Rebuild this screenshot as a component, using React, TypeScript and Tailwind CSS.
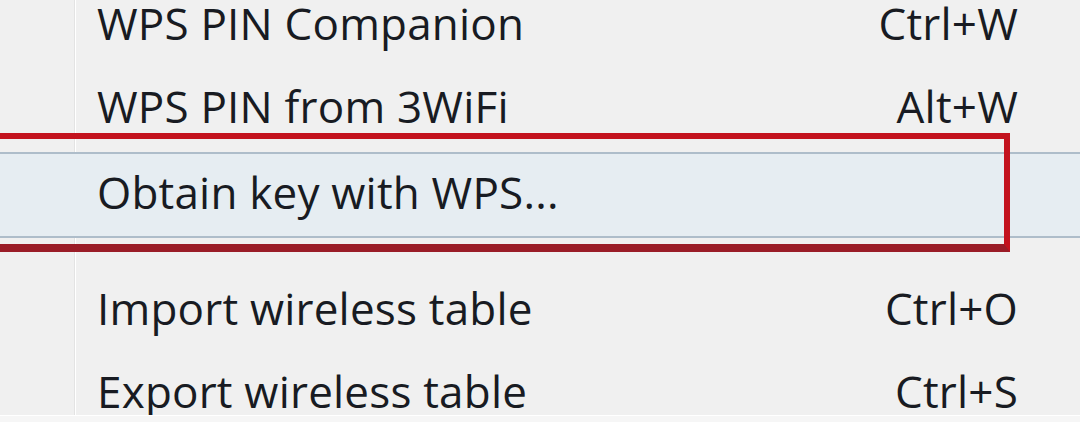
import React from "react";

const font = { fontFamily: '"Open Sans", "Noto Sans", "Liberation Sans", sans-serif' };

function Row({
  label,
  shortcut,
  className,
}: {
  label: string;
  shortcut?: string;
  className: string;
}) {
  return (
    <div className={`flex justify-between pl-[97px] pr-[62px] shrink-0 ${className}`}>
      <span>{label}</span>
      {shortcut ? <span>{shortcut}</span> : null}
    </div>
  );
}

export default function App() {
  return (
    <div
      className="relative w-[1080px] h-[422px] overflow-hidden bg-[#f0f0f0] text-[44px] leading-[40px] font-medium text-[#181b22] tracking-[0.2px]"
      style={font}
    >
      {/* gutter separator */}
      <div className="absolute left-[74px] top-0 bottom-0 w-[2px] bg-[#e3e3e3] border-r border-white" />
      <div className="relative flex flex-col">
        <Row label="WPS PIN Companion" shortcut="Ctrl+W" className="h-[63px] items-start pt-[3px]" />
        <Row label="WPS PIN from 3WiFi" shortcut="Alt+W" className="h-[89px] items-start pt-[23px]" />
        <div className="h-[86px] shrink-0 flex items-start pt-[18px] pl-[97px] pr-[62px] border-y-2 border-[#aebdca] bg-[#e6edf2]">
          <span>Obtain key with WPS...</span>
        </div>
        <div className="h-[27px] shrink-0" />
        <Row label="Import wireless table" shortcut="Ctrl+O" className="h-[83px] items-start pt-[23px]" />
        <Row label="Export wireless table" shortcut="Ctrl+S" className="h-[60px] items-start pt-[23px]" />
      </div>
      <div className="absolute left-0 right-0 top-[415px] bottom-0 bg-[#f6f6f6] border-t border-white" />
      {/* red annotation rectangle */}
      <div className="absolute left-[-10px] top-[133px] w-[1020px] h-[119px] border-[6px] border-b-[8px] border-[#c3121e] border-b-[#9a1c27]" />
    </div>
  );
}
